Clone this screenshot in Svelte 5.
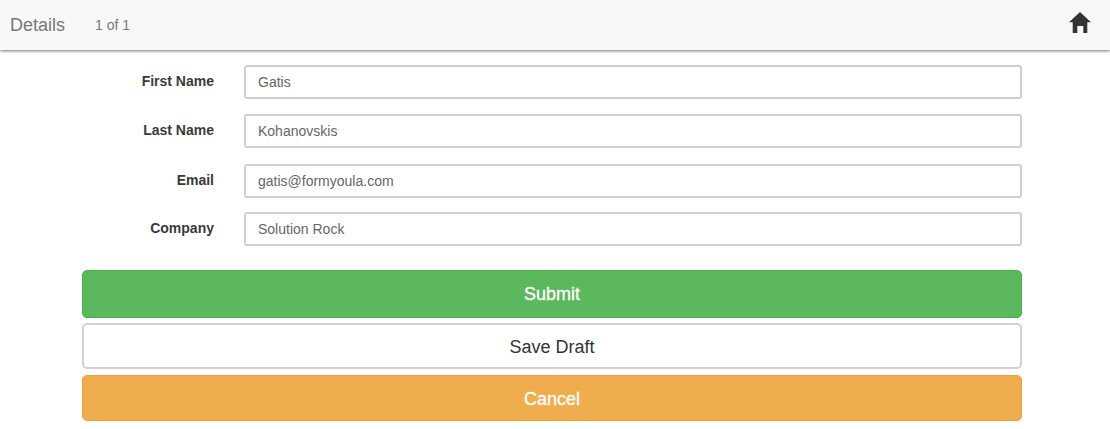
<script>
	const fields = [
		{ label: 'First Name', value: 'Gatis', gap: 15 },
		{ label: 'Last Name', value: 'Kohanovskis', gap: 15 },
		{ label: 'Email', value: 'gatis@formyoula.com', gap: 16 },
		{ label: 'Company', value: 'Solution Rock', gap: 14 }
	];
</script>

<header class="topbar">
	<span class="title">Details</span>
	<span class="count">1 of 1</span>
	<svg class="home" viewBox="0 0 22 21" width="22" height="21" aria-hidden="true">
		<path d="M11 0 L22 10.3 H18.3 V21 H14.3 V14 H8.3 V21 H3.7 V10.3 H0 Z" fill="#333" />
	</svg>
</header>

<main class="page">
	<form class="form">
		{#each fields as field}
			<div class="row" style="margin-top: {field.gap}px">
				<label class="label" for={field.label}>{field.label}</label>
				<input class="input" id={field.label} type="text" value={field.value} />
			</div>
		{/each}

		<div class="actions">
			<button type="button" class="btn submit">Submit</button>
			<button type="button" class="btn draft">Save Draft</button>
			<button type="button" class="btn cancel">Cancel</button>
		</div>
	</form>
</main>

<style>
	:global(body) {
		margin: 0;
		background: #fff;
		font-family: 'Liberation Sans', Arial, sans-serif;
		color: #333;
	}

	.topbar {
		display: flex;
		align-items: center;
		height: 50px;
		padding: 0 19px 0 10px;
		box-sizing: border-box;
		background: #f8f8f8;
		box-shadow: 0 1px 3px rgba(0, 0, 0, 0.55);
	}
	.title {
		font-size: 18px;
		color: #777;
	}
	.count {
		margin-left: 30px;
		font-size: 14px;
		color: #777;
	}
	.home {
		margin-left: auto;
		margin-top: -5px;
	}

	.page {
		padding: 0 88px 0 82px;
	}
	.row {
		display: flex;
		align-items: center;
	}
	.label {
		width: 132px;
		margin-top: -3px;
		text-align: right;
		font-size: 14px;
		font-weight: 700;
		color: #3a3a3a;
	}
	.input {
		flex: 1;
		height: 34px;
		margin-left: 30px;
		padding: 0 13px;
		box-sizing: border-box;
		border: 2px solid #d0d0d0;
		border-radius: 3px;
		background: #fff;
		font: 14px 'Liberation Sans', Arial, sans-serif;
		color: #666;
		outline: none;
		padding-left: 12px;
	}

	.actions {
		display: flex;
		flex-direction: column;
		margin-top: 24px;
	}
	.btn {
		display: block;
		width: 100%;
		box-sizing: border-box;
		border-radius: 5px;
		font: 18px 'Liberation Sans', Arial, sans-serif;
		padding: 0;
	}
	.submit {
		height: 48px;
		border: 1px solid #4cae4c;
		background: #5cb85c;
		color: #fff;
		-webkit-text-stroke: 0.3px #fff;
	}
	.draft {
		height: 46px;
		margin-top: 5px;
		padding-top: 2px;
		border: 2px solid #d2d2d2;
		background: #fff;
		color: #333;
	}
	.cancel {
		height: 46px;
		margin-top: 6px;
		padding-top: 2px;
		border: 1px solid #eea236;
		background: #f0ad4e;
		color: #fff;
		-webkit-text-stroke: 0.3px #fff;
	}
</style>
